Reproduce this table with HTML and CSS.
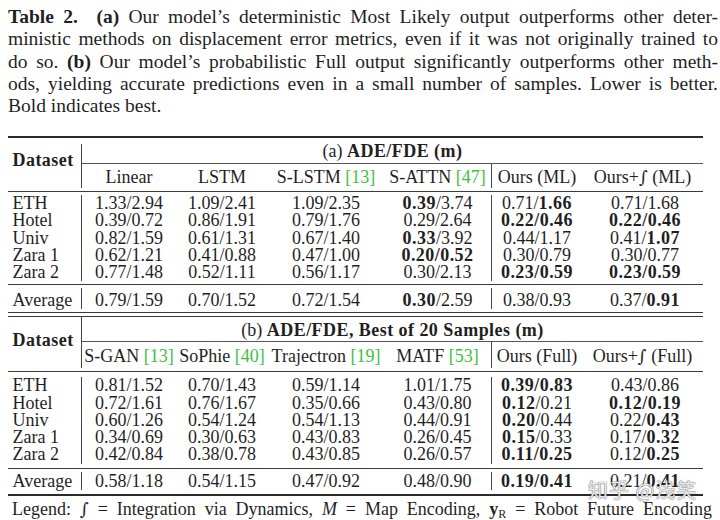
FILE: index.html
```html
<!DOCTYPE html>
<html lang="en">
<head>
<meta charset="utf-8">
<title>Table 2</title>
<link rel="stylesheet" href="styles.css">
</head>
<body>
<div class="page">
  <div class="caption"><p class="ln"><b>Table 2.</b>&nbsp; <b>(a)</b> Our model’s deterministic Most Likely output outperforms other deter-</p><p class="ln">ministic methods on displacement error metrics, even if it was not originally trained to</p><p class="ln">do so. <b>(b)</b> Our model’s probabilistic Full output significantly outperforms other meth-</p><p class="ln">ods, yielding accurate predictions even in a small number of samples. Lower is better.</p><p class="ln-end">Bold indicates best.</p></div>

  <table class="results">
    <colgroup>
      <col class="c-label"><col class="c1"><col class="c2"><col class="c3"><col class="c4"><col class="c5"><col class="c6">
    </colgroup>
    <tbody>
      <tr class="h2"><td class="rule-thick" colspan="7"></td></tr>
      <tr class="h6"><td></td><th class="group group-a" colspan="6" rowspan="2">(a) <b>ADE/FDE (m)</b></th></tr>
      <tr class="h20"><th class="dataset dataset-a" rowspan="2"><b>Dataset</b></th></tr>
      <tr class="head head-a">
        <th>Linear</th><th>LSTM</th><th>S-LSTM <span class="cite">[13]</span></th><th>S-ATTN <span class="cite">[47]</span></th><th class="sep">Ours (ML)</th><th>Ours+<span class="int">∫</span> (ML)</th>
      </tr>
      <tr class="h3"><td colspan="7"></td></tr>
      <tr class="h1"><td class="rule" colspan="7"></td></tr>
      <tr class="h3"><td colspan="7"></td></tr>
      <tr class="row"><td class="lbl">ETH</td><td>1.33/2.94</td><td>1.09/2.41</td><td>1.09/2.35</td><td><b>0.39</b>/3.74</td><td class="sep">0.71/<b>1.66</b></td><td class="last">0.71/1.68</td></tr>
      <tr class="row"><td class="lbl">Hotel</td><td>0.39/0.72</td><td>0.86/1.91</td><td>0.79/1.76</td><td>0.29/2.64</td><td class="sep"><b>0.22/0.46</b></td><td class="last"><b>0.22/0.46</b></td></tr>
      <tr class="row"><td class="lbl">Univ</td><td>0.82/1.59</td><td>0.61/1.31</td><td>0.67/1.40</td><td><b>0.33</b>/3.92</td><td class="sep">0.44/1.17</td><td class="last">0.41/<b>1.07</b></td></tr>
      <tr class="row"><td class="lbl">Zara 1</td><td>0.62/1.21</td><td>0.41/0.88</td><td>0.47/1.00</td><td><b>0.20/0.52</b></td><td class="sep">0.30/0.79</td><td class="last">0.30/0.77</td></tr>
      <tr class="row"><td class="lbl">Zara 2</td><td>0.77/1.48</td><td>0.52/1.11</td><td>0.56/1.17</td><td>0.30/2.13</td><td class="sep"><b>0.23/0.59</b></td><td class="last"><b>0.23/0.59</b></td></tr>
      <tr class="h3"><td colspan="7"></td></tr>
      <tr class="h1"><td class="rule" colspan="7"></td></tr>
      <tr class="h3"><td colspan="7"></td></tr>
      <tr class="avg avg-a"><td class="lbl">Average</td><td>0.79/1.59</td><td>0.70/1.52</td><td>0.72/1.54</td><td><b>0.30</b>/2.59</td><td class="sep">0.38/0.93</td><td class="last">0.37/<b>0.91</b></td></tr>
      <tr class="h3"><td colspan="7"></td></tr>
      <tr class="h1"><td class="rule" colspan="7"></td></tr>
      <tr class="h3"><td colspan="7"></td></tr>
      <tr class="h1"><td class="rule" colspan="7"></td></tr>

      <tr class="h25"><th class="dataset dataset-b" rowspan="2"><b>Dataset</b></th><th class="group group-b" colspan="6">(b) <b>ADE/FDE, Best of 20 Samples (m)</b></th></tr>
      <tr class="head head-b">
        <th>S-GAN <span class="cite">[13]</span></th><th>SoPhie <span class="cite">[40]</span></th><th>Trajectron <span class="cite">[19]</span></th><th>MATF <span class="cite">[53]</span></th><th class="sep">Ours (Full)</th><th>Ours+<span class="int">∫</span> (Full)</th>
      </tr>
      <tr class="h3"><td colspan="7"></td></tr>
      <tr class="h1"><td class="rule" colspan="7"></td></tr>
      <tr class="h5"><td colspan="7"></td></tr>
      <tr class="row"><td class="lbl">ETH</td><td>0.81/1.52</td><td>0.70/1.43</td><td>0.59/1.14</td><td>1.01/1.75</td><td class="sep"><b>0.39/0.83</b></td><td class="last">0.43/0.86</td></tr>
      <tr class="row"><td class="lbl">Hotel</td><td>0.72/1.61</td><td>0.76/1.67</td><td>0.35/0.66</td><td>0.43/0.80</td><td class="sep"><b>0.12</b>/0.21</td><td class="last"><b>0.12/0.19</b></td></tr>
      <tr class="row"><td class="lbl">Univ</td><td>0.60/1.26</td><td>0.54/1.24</td><td>0.54/1.13</td><td>0.44/0.91</td><td class="sep"><b>0.20</b>/0.44</td><td class="last">0.22/<b>0.43</b></td></tr>
      <tr class="row"><td class="lbl">Zara 1</td><td>0.34/0.69</td><td>0.30/0.63</td><td>0.43/0.83</td><td>0.26/0.45</td><td class="sep"><b>0.15</b>/0.33</td><td class="last">0.17/<b>0.32</b></td></tr>
      <tr class="row"><td class="lbl">Zara 2</td><td>0.42/0.84</td><td>0.38/0.78</td><td>0.43/0.85</td><td>0.26/0.57</td><td class="sep"><b>0.11/0.25</b></td><td class="last">0.12/<b>0.25</b></td></tr>
      <tr class="h4"><td colspan="7"></td></tr>
      <tr class="h1"><td class="rule" colspan="7"></td></tr>
      <tr class="h3"><td colspan="7"></td></tr>
      <tr class="avg avg-b"><td class="lbl">Average</td><td>0.58/1.18</td><td>0.54/1.15</td><td>0.47/0.92</td><td>0.48/0.90</td><td class="sep"><b>0.19/0.41</b></td><td class="last">0.21/<b>0.41</b></td></tr>
      <tr class="h4"><td colspan="7"></td></tr>
      <tr class="h2"><td class="rule-thick" colspan="7"></td></tr>
    </tbody>
  </table>

  <p class="legend">Legend: <span class="int">∫</span> = Integration via Dynamics, <i>M</i> = Map Encoding, <b class="vec">y</b><sub>R</sub> = Robot Future Encoding</p>
</div>

<div class="watermark">知乎 @浅笑</div>
</body>
</html>
```

FILE: styles.css
```css
html, body {
  margin: 0;
  padding: 0;
  background: #ffffff;
}

body {
  position: relative;
  width: 720px;
  height: 520px;
  overflow: hidden;
  font-family: "Liberation Serif", "Times New Roman", serif;
  color: #1f1f1f;
}

.page {
  padding: 6px 2px 0 8px;
}

/* ---------- caption ---------- */
.caption {
  font-size: 19.5px;
  line-height: 22.25px;
}

.caption .ln,
.caption .ln-end {
  margin: 0;
  text-indent: 0;
}

.caption .ln {
  text-align: justify;
  text-align-last: justify;
}

.caption .ln-end {
  text-align: left;
  text-align-last: left;
}

/* ---------- table ---------- */
.results {
  margin-top: 18.75px;
  width: 695px;
  table-layout: fixed;
  border-collapse: separate;
  border-spacing: 0;
  font-size: 18px;
}

.c-label { width: 74px; }
.c1 { width: 94px; }
.c2 { width: 92px; }
.c3 { width: 116px; }
.c4 { width: 107px; }
.c5 { width: 91px; }
.c6 { width: 121px; }

.results td,
.results th {
  padding: 0;
  font-weight: normal;
  text-align: center;
  white-space: nowrap;
}

.results b {
  font-weight: bold;
  letter-spacing: 0.45px;
}

/* spacer rows */
.h1 { height: 1px; }
.h2 { height: 2px; }
.h3 { height: 3px; }
.h4 { height: 4px; }
.h5 { height: 5px; }
.h6 { height: 6px; }
.h20 { height: 20px; }
.h25 { height: 25px; }

.rule-thick { border-top: 2px solid #2a2a2a; }
.rule { border-top: 1px solid #3a3a3a; }

/* group headings */
.group {
  line-height: 20px;
  border-bottom: 1px solid #555;
}

.group-b {
  padding-top: 2px !important;
}

.dataset {
  text-align: left !important;
  padding-left: 4.5px !important;
  border-right: 1px solid #444;
  line-height: 20px;
}

.dataset-a { padding-bottom: 13px !important; }
.dataset-b { padding-bottom: 5.5px !important; }

.head-a { height: 24px; }
.head-b { height: 26px; }

.head th {
  line-height: 20px;
  padding-top: 2px;
}

.cite { color: #3cc23c; }

.int {
  font-family: "DejaVu Serif", serif;
  font-style: italic;
  font-size: 0.95em;
}

.sep { border-left: 1px solid #444; }

/* data rows */
.row { height: 17.25px; }
.row td { line-height: 17.25px; }

.avg td { line-height: 17px; }
.avg-a td { padding-top: 4px; }
.avg-b td { padding-top: 1px; }

.lbl {
  text-align: left !important;
  padding-left: 4.5px !important;
  border-right: 1px solid #444;
}

.last { padding-left: 5px !important; }

/* ---------- legend ---------- */
.legend {
  margin: 3px 0 0;
  padding-left: 4px;
  width: 700px;
  font-size: 18px;
  line-height: 20px;
  text-align: justify;
  text-align-last: justify;
  white-space: nowrap;
}

.legend .vec {
  font-weight: bold;
}

.legend sub {
  font-size: 12px;
  line-height: 0;
  vertical-align: -3px;
}

/* ---------- watermark (overlay) ---------- */
.watermark {
  position: absolute;
  left: 588px;
  top: 477px;
  font-family: "Noto Sans CJK SC", sans-serif;
  font-size: 20px;
  line-height: 26px;
  letter-spacing: 1px;
  color: rgba(255, 255, 255, 0.88);
  text-shadow: 0 0 1px rgba(90, 90, 90, 0.9), 0 0 1px rgba(90, 90, 90, 0.9);
}
```
